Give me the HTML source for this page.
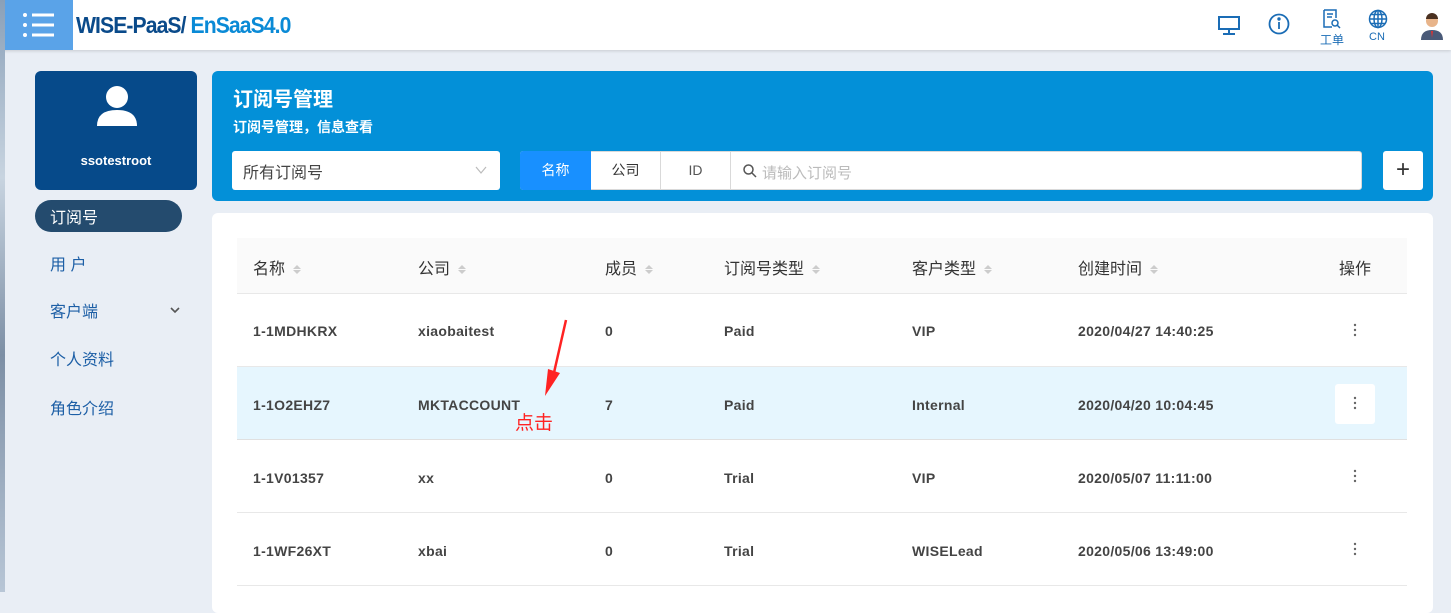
<!DOCTYPE html>
<html><head><meta charset="utf-8"><style>
*{margin:0;padding:0;box-sizing:border-box}
body{width:1451px;height:592px;overflow:hidden;background:#e9eef5;font-family:"Liberation Sans","Noto Sans CJK SC",sans-serif;position:relative}
.a{position:absolute}
.top{left:0;top:0;width:1451px;height:50px;background:#fff;box-shadow:0 1px 3px rgba(0,0,0,.15)}
.strip{left:0;top:0;width:5px;height:592px;background:linear-gradient(#8aa0b8,#c8d4e0 30%,#7d8fa5 60%,#b8c6d6)}
.th{font-size:16px;color:#333;top:255px}
.sort{display:inline-block;width:8px;margin-left:8px;vertical-align:middle;line-height:0}
.sort i{display:block;width:0;height:0;border-left:4px solid transparent;border-right:4px solid transparent;margin:1px 0}
.td{font-size:14px;font-weight:bold;color:#444;letter-spacing:.3px}
.nav{left:50px;font-size:16px;color:#1d5fa6}
</style></head><body>
<div class="a top"></div>
<div class="a" style="left:5px;top:0;width:68px;height:50px;background:#5aa3e8"></div>
<svg class="a" style="left:22px;top:12px" width="36" height="26"><g fill="#fff"><circle cx="3" cy="3" r="2"/><circle cx="3" cy="13" r="2"/><circle cx="3" cy="23" r="2"/><rect x="10" y="1.5" width="22" height="3"/><rect x="10" y="11.5" width="22" height="3"/><rect x="10" y="21.5" width="22" height="3"/></g></svg>
<div class="a" style="left:76px;top:12px;font-size:23px;font-weight:bold;letter-spacing:-1px;color:#0a4a8a;transform:scaleX(.92);transform-origin:left">WISE-PaaS/ <span style="color:#0a8ad6">EnSaaS4.0</span></div>
<svg class="a" style="left:1217px;top:15px" width="24" height="20" fill="none" stroke="#1a6cb5" stroke-width="2"><rect x="2" y="2" width="20" height="12"/><path d="M12 14v4M6 19h12"/></svg>
<svg class="a" style="left:1268px;top:13px" width="22" height="22" fill="none" stroke="#1a6cb5" stroke-width="1.8"><circle cx="11" cy="11" r="9.5"/><path d="M11 9v7"/><circle cx="11" cy="6" r=".8" fill="#1a6cb5"/></svg>
<svg class="a" style="left:1322px;top:9px" width="20" height="20" fill="none" stroke="#1a6cb5" stroke-width="1.5"><path d="M2 1h12v8M2 1v17h8"/><path d="M5 5h6M5 8h5"/><circle cx="13" cy="14" r="3"/><path d="M15 16l3 3"/></svg>
<div class="a" style="left:1320px;top:31px;font-size:12px;color:#1a6cb5">工单</div>
<svg class="a" style="left:1368px;top:9px" width="20" height="20" fill="none" stroke="#1a6cb5" stroke-width="1.5"><circle cx="10" cy="10" r="8.5"/><ellipse cx="10" cy="10" rx="4" ry="8.5"/><path d="M1.5 10h17M3 5.5h14M3 14.5h14M10 1.5v17"/></svg>
<div class="a" style="left:1369px;top:31px;font-size:11px;color:#1a6cb5">CN</div>
<svg class="a" style="left:1420px;top:12px" width="24" height="28"><circle cx="12" cy="9" r="6" fill="#e8b48a"/><path d="M6 7a6 6 0 0112 0z" fill="#4a3020"/><path d="M1 28q0-10 11-10t11 10z" fill="#4a5a78"/><path d="M11 19h2l-1 7z" fill="#d33"/></svg>
<div class="a strip"></div>
<div class="a" style="left:35px;top:71px;width:162px;height:119px;background:#064a8a;border-radius:6px"></div>
<svg class="a" style="left:96px;top:85px" width="42" height="42" fill="#fff"><circle cx="21" cy="12" r="11"/><path d="M1 41q0-16 20-16t20 16z"/></svg>
<div class="a" style="left:35px;width:162px;top:153px;text-align:center;color:#fff;font-size:13px;font-weight:bold">ssotestroot</div>
<div class="a" style="left:35px;top:200px;width:147px;height:32px;background:#244b6e;border-radius:16px;color:#fff;font-size:16px;padding:4px 0 0 15px">订阅号</div>
<div class="a nav" style="top:251px">用 户</div>
<div class="a nav" style="top:298px">客户端</div>
<svg class="a" style="left:170px;top:306px" width="10" height="8" fill="none" stroke="#555" stroke-width="1.6"><path d="M1 2l4 4 4-4"/></svg>
<div class="a nav" style="top:346px">个人资料</div>
<div class="a nav" style="top:395px">角色介绍</div>
<div class="a" style="left:212px;top:71px;width:1221px;height:130px;background:#0390d8;border-radius:6px"></div>
<div class="a" style="left:233px;top:83px;color:#fff;font-size:20px;font-weight:bold">订阅号管理</div>
<div class="a" style="left:233px;top:117px;color:#fff;font-size:14px;font-weight:bold">订阅号管理，信息查看</div>
<div class="a" style="left:232px;top:151px;width:268px;height:39px;background:#fff;border-radius:3px;font-size:16px;color:#444;padding:8px 0 0 11px">所有订阅号</div>
<svg class="a" style="left:475px;top:166px" width="12" height="8" fill="none" stroke="#bbb" stroke-width="1.2"><path d="M1 1l5 6 5-6"/></svg>
<div class="a" style="left:520px;top:151px;width:842px;height:39px;background:#fff;border-radius:3px;border:1px solid #d9d9d9"></div>
<div class="a" style="left:520px;top:151px;width:71px;height:39px;background:#1890ff;border-radius:3px 0 0 3px;color:#fff;font-size:14px;text-align:center;line-height:39px">名称</div>
<div class="a" style="left:591px;top:151px;width:70px;height:39px;border-right:1px solid #d9d9d9;font-size:14px;color:#333;text-align:center;line-height:39px">公司</div>
<div class="a" style="left:661px;top:151px;width:70px;height:39px;border-right:1px solid #d9d9d9;font-size:14px;color:#555;text-align:center;line-height:39px">ID</div>
<svg class="a" style="left:743px;top:164px" width="14" height="14" fill="none" stroke="#555" stroke-width="1.5"><circle cx="5.5" cy="5.5" r="4.5"/><path d="M9 9l4 4"/></svg>
<div class="a" style="left:762px;top:162px;font-size:15px;color:#bbb">请输入订阅号</div>
<div class="a" style="left:1383px;top:151px;width:40px;height:39px;background:#fff;border-radius:3px;font-size:24px;color:#333;text-align:center;line-height:38px">+</div>
<div class="a" style="left:212px;top:213px;width:1221px;height:400px;background:#fff;border-radius:6px"></div>
<div class="a" style="left:237px;top:238px;width:1170px;height:56px;background:#fafafa;border-bottom:1px solid #e8e8e8"></div>
<div class="a" style="left:237px;top:294px;width:1170px;height:73px;border-bottom:1px solid #e8e8e8"></div>
<div class="a" style="left:237px;top:367px;width:1170px;height:73px;background:#e6f6fe;border-bottom:1px solid #e0e0e0"></div>
<div class="a" style="left:237px;top:440px;width:1170px;height:73px;border-bottom:1px solid #e8e8e8"></div>
<div class="a" style="left:237px;top:513px;width:1170px;height:73px;border-bottom:1px solid #e8e8e8"></div>
<div class="a th" style="left:253px">名称<span class="sort"><i style="border-bottom:4px solid #ccc"></i><i style="border-top:4px solid #ccc"></i></span></div>
<div class="a th" style="left:418px">公司<span class="sort"><i style="border-bottom:4px solid #ccc"></i><i style="border-top:4px solid #ccc"></i></span></div>
<div class="a th" style="left:605px">成员<span class="sort"><i style="border-bottom:4px solid #ccc"></i><i style="border-top:4px solid #ccc"></i></span></div>
<div class="a th" style="left:724px">订阅号类型<span class="sort"><i style="border-bottom:4px solid #ccc"></i><i style="border-top:4px solid #ccc"></i></span></div>
<div class="a th" style="left:912px">客户类型<span class="sort"><i style="border-bottom:4px solid #ccc"></i><i style="border-top:4px solid #ccc"></i></span></div>
<div class="a th" style="left:1078px">创建时间<span class="sort"><i style="border-bottom:4px solid #ccc"></i><i style="border-top:4px solid #ccc"></i></span></div>
<div class="a th" style="left:1339px">操作</div>

<div class="a td" style="left:253px;top:323px">1-1MDHKRX</div>
<div class="a td" style="left:418px;top:323px">xiaobaitest</div>
<div class="a td" style="left:605px;top:323px">0</div>
<div class="a td" style="left:724px;top:323px">Paid</div>
<div class="a td" style="left:912px;top:323px">VIP</div>
<div class="a td" style="left:1078px;top:323px">2020/04/27 14:40:25</div>

<div class="a td" style="left:253px;top:397px">1-1O2EHZ7</div>
<div class="a td" style="left:418px;top:397px">MKTACCOUNT</div>
<div class="a td" style="left:605px;top:397px">7</div>
<div class="a td" style="left:724px;top:397px">Paid</div>
<div class="a td" style="left:912px;top:397px">Internal</div>
<div class="a td" style="left:1078px;top:397px">2020/04/20 10:04:45</div>

<div class="a td" style="left:253px;top:470px">1-1V01357</div>
<div class="a td" style="left:418px;top:470px">xx</div>
<div class="a td" style="left:605px;top:470px">0</div>
<div class="a td" style="left:724px;top:470px">Trial</div>
<div class="a td" style="left:912px;top:470px">VIP</div>
<div class="a td" style="left:1078px;top:470px">2020/05/07 11:11:00</div>

<div class="a td" style="left:253px;top:543px">1-1WF26XT</div>
<div class="a td" style="left:418px;top:543px">xbai</div>
<div class="a td" style="left:605px;top:543px">0</div>
<div class="a td" style="left:724px;top:543px">Trial</div>
<div class="a td" style="left:912px;top:543px">WISELead</div>
<div class="a td" style="left:1078px;top:543px">2020/05/06 13:49:00</div>

<div class="a" style="left:1335px;top:384px;width:40px;height:40px;background:#fff;border-radius:3px"></div>
<svg class="a" style="left:1353px;top:323px" width="4" height="240" fill="#666"><g><circle cx="2" cy="2" r="1.2"/><circle cx="2" cy="7" r="1.2"/><circle cx="2" cy="12" r="1.2"/></g><g transform="translate(0,73)"><circle cx="2" cy="2" r="1.2"/><circle cx="2" cy="7" r="1.2"/><circle cx="2" cy="12" r="1.2"/></g><g transform="translate(0,146)"><circle cx="2" cy="2" r="1.2"/><circle cx="2" cy="7" r="1.2"/><circle cx="2" cy="12" r="1.2"/></g><g transform="translate(0,219)"><circle cx="2" cy="2" r="1.2"/><circle cx="2" cy="7" r="1.2"/><circle cx="2" cy="12" r="1.2"/></g></svg>
<svg class="a" style="left:530px;top:315px" width="45" height="90"><path d="M36 5L23 62" stroke="#f22" stroke-width="2.5" fill="none"/><path d="M15 81L18 54L30 58z" fill="#f22"/></svg>
<div class="a" style="left:515px;top:408px;font-size:19px;color:#f22">点击</div>
</body></html>
